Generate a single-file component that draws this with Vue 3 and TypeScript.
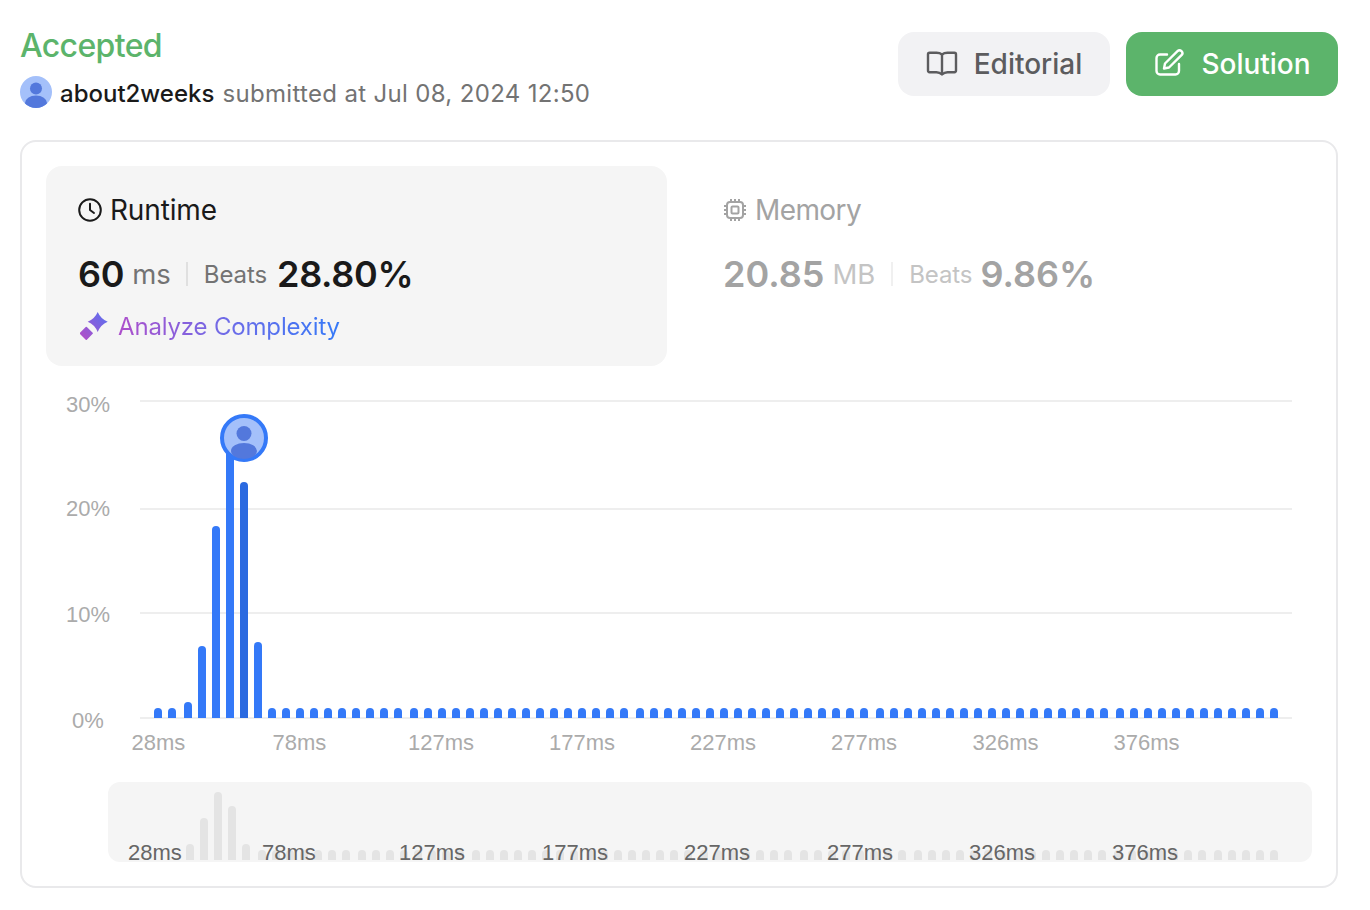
<script setup lang="ts">
const mainJumps = [2, 18, 34, 51, 68]
const miniJumps = [5, 12, 20, 28, 36, 43, 51, 58, 65, 72]

const tops: Record<number, number> = { 0: 708, 1: 708, 2: 702, 3: 646, 4: 526, 5: 448, 6: 482, 7: 642 }
const mainBars = Array.from({ length: 80 }, (_, i) => {
  const x = 154 + i * 14 + 2 * mainJumps.filter((j) => j <= i).length
  const top = tops[i] ?? 708
  return { x, top, h: 718 - top, active: i === 6 }
})

const miniTops: Record<number, number> = { 0: 844, 1: 818, 2: 792, 3: 806, 4: 844 }
const miniBars = Array.from({ length: 77 }, (_, i) => {
  const x = 186 + i * 14 + 2 * miniJumps.filter((j) => j <= i).length
  const top = miniTops[i] ?? 850
  return { x, top, h: 860 - top }
})

function barPath(x: number, top: number, h: number): string {
  return `M${x} ${top + h}V${top + 4}a4 4 0 0 1 8 0V${top + h}Z`
}

const yLabels = [
  { t: '30%', x: 66, y: 412 },
  { t: '20%', x: 66, y: 516 },
  { t: '10%', x: 66, y: 622 },
  { t: '0%', x: 72, y: 728 },
]
const gridLines = [401, 509, 613, 718]
const xLabels = [
  { t: '28ms', x: 131.5 },
  { t: '78ms', x: 272.5 },
  { t: '127ms', x: 408 },
  { t: '177ms', x: 549 },
  { t: '227ms', x: 690 },
  { t: '277ms', x: 831 },
  { t: '326ms', x: 972.5 },
  { t: '376ms', x: 1113.5 },
]
const miniLabels = [
  { t: '28ms', x: 128 },
  { t: '78ms', x: 262 },
  { t: '127ms', x: 399 },
  { t: '177ms', x: 542 },
  { t: '227ms', x: 684 },
  { t: '277ms', x: 827 },
  { t: '326ms', x: 969 },
  { t: '376ms', x: 1112 },
]
</script>

<template>
  <div class="page">
    <header class="head">
      <div class="head-left">
        <h1 class="status">Accepted</h1>
        <div class="byline">
          <svg class="avatar" viewBox="0 0 32 32">
            <circle cx="16" cy="16" r="16" fill="#a4c0fa" />
            <clipPath id="av"><circle cx="16" cy="16" r="16" /></clipPath>
            <g clip-path="url(#av)" fill="#5378dc">
              <circle cx="16" cy="12.5" r="6" />
              <ellipse cx="16" cy="27" rx="11" ry="7.5" />
            </g>
          </svg>
          <span class="user">about2weeks</span>
          <span class="when">submitted at Jul 08, 2024 12:50</span>
        </div>
      </div>
      <div class="actions">
        <button class="btn btn-grey">
          <svg viewBox="0 0 32 32" class="btn-icon" fill="none" stroke="#5c5c5e" stroke-width="2.4" stroke-linejoin="round" stroke-linecap="round">
            <path d="M16 6.5C14.5 5.3 12.5 4.8 10.5 4.8H3.6A1.6 1.6 0 0 0 2 6.4V22.6A1.6 1.6 0 0 0 3.6 24.2H10.5C12.5 24.2 14.5 25 16 26.4C17.5 25 19.5 24.2 21.5 24.2H28.4A1.6 1.6 0 0 0 30 22.6V6.4A1.6 1.6 0 0 0 28.4 4.8H21.5C19.5 4.8 17.5 5.3 16 6.5Z" />
            <path d="M16 6.5V26" />
          </svg>
          <span>Editorial</span>
        </button>
        <button class="btn btn-green">
          <svg viewBox="0 0 32 32" class="btn-icon" fill="none" stroke="#fff" stroke-width="2.4" stroke-linejoin="round" stroke-linecap="round">
            <path d="M14 6.5H7A3.5 3.5 0 0 0 3.5 10V23A3.5 3.5 0 0 0 7 26.5H22.5A3.5 3.5 0 0 0 26 23V16" />
            <path d="M24.5 3.2A2.8 2.8 0 0 1 28.5 7.2L16 19.5 11 20.5 12 15.5Z" />
          </svg>
          <span>Solution</span>
        </button>
      </div>
    </header>

    <section class="card">
      <div class="stats">
        <div class="stat stat-on">
          <div class="stat-title">
            <svg viewBox="0 0 24 24" class="stat-icon" fill="none" stroke="#1a1a1a" stroke-width="2" stroke-linecap="round" stroke-linejoin="round">
              <circle cx="12" cy="12" r="10.8" />
              <path d="M12 5.8V12L16 15" />
            </svg>
            <span>Runtime</span>
          </div>
          <div class="stat-values">
            <span class="big">60</span>
            <span class="unit">ms</span>
            <span class="sep"></span>
            <span class="beats">Beats</span>
            <span class="big">28.80%</span>
          </div>
          <div class="analyze">
            <svg viewBox="0 0 28 28" class="spark">
              <defs>
                <linearGradient id="sg" gradientUnits="userSpaceOnUse" x1="2" y1="26" x2="27" y2="2">
                  <stop offset="0" stop-color="#b04fc8" />
                  <stop offset="1" stop-color="#5a70f0" />
                </linearGradient>
              </defs>
              <path fill="url(#sg)" d="M17.7 0Q20.6 6.8 27.7 9.7 20.6 12.6 17.7 20 14.8 12.6 7.7 9.7 14.8 6.8 17.7 0Z" />
              <path fill="url(#sg)" stroke="url(#sg)" stroke-width="1.6" stroke-linejoin="round" d="M6.3 15.5L12.1 21.3 6.3 27.1 0.5 21.3Z" />
            </svg>
            <span class="analyze-text">Analyze Complexity</span>
          </div>
        </div>
        <div class="stat stat-off">
          <div class="stat-title">
            <svg viewBox="0 0 24 24" class="stat-icon" fill="none" stroke="#a3a3a3" stroke-width="2" stroke-linejoin="round">
              <rect x="4" y="4" width="16" height="16" rx="3" />
              <rect x="8.5" y="8.5" width="7" height="7" rx="1" />
              <path d="M8 1V4M12 1V4M16 1V4M8 20V23M12 20V23M16 20V23M1 8H4M1 12H4M1 16H4M20 8H23M20 12H23M20 16H23" />
            </svg>
            <span class="memory-label">Memory</span>
          </div>
          <div class="stat-values">
            <span class="big">20.85</span>
            <span class="unit">MB</span>
            <span class="sep"></span>
            <span class="beats">Beats</span>
            <span class="big">9.86%</span>
          </div>
        </div>
      </div>

      <svg class="chart" viewBox="46 366 1266 416" width="1266" height="416">
        <line v-for="g in gridLines" :key="g" x1="140" x2="1292" :y1="g" :y2="g" stroke="#eeeeee" stroke-width="2" />
        <text v-for="l in yLabels" :key="l.t" class="axis" :x="l.x" :y="l.y">{{ l.t }}</text>
        <text v-for="l in xLabels" :key="l.t" class="axis" :x="l.x" y="750">{{ l.t }}</text>
        <path v-for="b in mainBars" :key="b.x" :d="barPath(b.x, b.top, b.h)" :fill="b.active ? '#2b6ae0' : '#3479f8'" />
        <clipPath id="mark"><circle cx="244" cy="438" r="21" /></clipPath>
        <circle cx="244" cy="438" r="22" fill="#a4c0fa" stroke="#3479f8" stroke-width="4" />
        <g clip-path="url(#mark)" fill="#5378dc">
          <circle cx="244" cy="433.5" r="7.5" />
          <ellipse cx="244" cy="451" rx="13" ry="8" />
        </g>
      </svg>

      <div class="mini">
        <svg viewBox="108 782 1204 80" width="1204" height="80">
          <path v-for="b in miniBars" :key="b.x" :d="barPath(b.x, b.top, b.h)" fill="#e4e4e4" />
          <text v-for="l in miniLabels" :key="l.t" class="axis-mini" :x="l.x" y="860">{{ l.t }}</text>
        </svg>
      </div>
    </section>
  </div>
</template>

<style scoped>
.page {
  width: 1370px;
  height: 910px;
  box-sizing: border-box;
  padding: 0 32px 0 20px;
  font-family: Inter, "Liberation Sans", sans-serif;
  color: #1a1a1a;
  background: #fff;
  overflow: hidden;
}
.head {
  display: flex;
  justify-content: space-between;
  height: 140px;
  padding-top: 26px;
  box-sizing: border-box;
}
.head-left {
  display: flex;
  flex-direction: column;
}
.status {
  margin: 0;
  padding-top: 1px;
  font-size: 32px;
  font-weight: 500;
  line-height: 38px;
  letter-spacing: -0.65px;
  color: #5cb46b;
}
.byline {
  display: flex;
  align-items: center;
  margin-top: 11px;
  height: 32px;
  font-size: 24px;
  line-height: 34px;
}
.avatar {
  width: 32px;
  height: 32px;
  margin-right: 8px;
}
.user {
  padding-top: 3px;
  font-weight: 500;
  color: #1a1a1a;
  margin-right: 8px;
}
.when {
  padding-top: 3px;
  color: #737373;
  letter-spacing: 0.33px;
}
.actions {
  display: flex;
  gap: 16px;
  padding-top: 6px;
}
.btn {
  display: flex;
  align-items: center;
  justify-content: center;
  gap: 16px;
  width: 212px;
  height: 64px;
  border: 0;
  border-radius: 16px;
  font-family: inherit;
  font-size: 28px;
  font-weight: 500;
}
.btn-grey {
  background: #f2f2f4;
  color: #5c5c5e;
}
.btn-green {
  background: #5cb46b;
  color: #fff;
}
.btn-icon {
  width: 32px;
  height: 32px;
}
.card {
  border: 2px solid #e9e9eb;
  border-radius: 16px;
  padding: 24px;
  height: 748px;
  box-sizing: border-box;
}
.stats {
  display: grid;
  grid-template-columns: 621px 621px;
  gap: 24px;
  height: 200px;
}
.stat {
  padding: 28px 32px 0;
  border-radius: 16px;
}
.stat-on {
  background: #f5f5f5;
}
.stat-title {
  display: flex;
  align-items: center;
  gap: 8px;
  height: 32px;
  font-size: 28px;
  letter-spacing: -0.15px;
}
.memory-label {
  letter-spacing: -0.6px;
}
.stat-icon {
  width: 24px;
  height: 24px;
}
.stat-values {
  display: flex;
  align-items: center;
  margin-top: 28px;
  height: 40px;
}
.big {
  font-size: 36px;
  font-weight: 600;
  line-height: 40px;
}
.stat-on .big {
  letter-spacing: -0.3px;
}
.unit {
  font-size: 27.5px;
  color: #737373;
  margin-left: 8px;
}
.sep {
  width: 2px;
  height: 24px;
  background: #e0e0e0;
  margin: 0 16px;
}
.stat-on .sep {
  margin: 0 15.5px;
}
.beats {
  font-size: 24px;
  color: #737373;
  margin-right: 8px;
  letter-spacing: -0.1px;
}
.stat-on .beats {
  margin-right: 10px;
}
.analyze {
  display: flex;
  align-items: center;
  gap: 10px;
  margin-top: 18px;
  padding-left: 2px;
  height: 28px;
}
.spark {
  width: 28px;
  height: 28px;
}
.analyze-text {
  font-size: 24px;
  letter-spacing: -0.17px;
  background: linear-gradient(90deg, #ad4fcb 0%, #6d6ce8 50%, #3479f8 100%);
  -webkit-background-clip: text;
  background-clip: text;
  color: transparent;
}
.stat-off {
  color: #a3a3a3;
}
.stat-off .big {
  color: #a3a3a3;
}
.stat-off .unit,
.stat-off .beats {
  color: #c4c4c4;
}
.stat-off .sep {
  background: #f0f0f0;
}
.chart {
  display: block;
}
.axis {
  font-family: "Liberation Sans", Arial, sans-serif;
  font-size: 22px;
  fill: #ababab;
}
.axis-mini {
  font-family: "Liberation Sans", Arial, sans-serif;
  font-size: 22px;
  fill: #666666;
}
.mini {
  margin-left: 62px;
  width: 1204px;
  height: 80px;
  background: #f5f5f5;
  border-radius: 12px;
}
.mini svg {
  display: block;
  overflow: visible;
}
</style>
